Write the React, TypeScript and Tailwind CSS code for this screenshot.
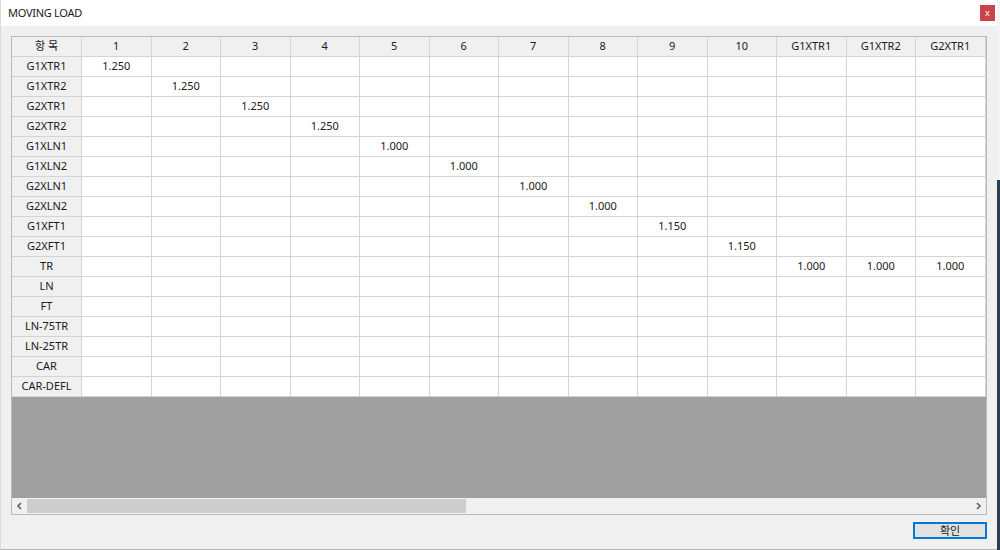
import React from "react";

const columns = ["1", "2", "3", "4", "5", "6", "7", "8", "9", "10", "G1XTR1", "G1XTR2", "G2XTR1"];

type Row = { name: string; values: Record<number, string> };

const rows: Row[] = [
  { name: "G1XTR1", values: { 0: "1.250" } },
  { name: "G1XTR2", values: { 1: "1.250" } },
  { name: "G2XTR1", values: { 2: "1.250" } },
  { name: "G2XTR2", values: { 3: "1.250" } },
  { name: "G1XLN1", values: { 4: "1.000" } },
  { name: "G1XLN2", values: { 5: "1.000" } },
  { name: "G2XLN1", values: { 6: "1.000" } },
  { name: "G2XLN2", values: { 7: "1.000" } },
  { name: "G1XFT1", values: { 8: "1.150" } },
  { name: "G2XFT1", values: { 9: "1.150" } },
  { name: "TR", values: { 10: "1.000", 11: "1.000", 12: "1.000" } },
  { name: "LN", values: {} },
  { name: "FT", values: {} },
  { name: "LN-75TR", values: {} },
  { name: "LN-25TR", values: {} },
  { name: "CAR", values: {} },
  { name: "CAR-DEFL", values: {} },
];

const font = "font-['Noto_Sans','Noto_Sans_CJK_KR',sans-serif]";

const MovingLoadDialog = () => {
  return (
    <div className={`flex w-[1000px] h-[550px] bg-white text-[#1a1a1a] ${font}`}>
      <div className="flex flex-col w-[997px] h-full bg-[#f0f0f0] border-l border-[#dcdcdc] border-b border-b-[#b4b4b4]">
        {/* title bar */}
        <div className="flex items-center justify-between h-[26px] bg-white pl-[7px] pr-[2px] shrink-0">
          <span className="text-[11px] tracking-tight">MOVING LOAD</span>
          <button className="flex items-center justify-center w-[15px] h-[16px] bg-[#c9434a] text-white text-[9px] leading-none mb-[1px]">
            x
          </button>
        </div>

        {/* grid */}
        <div className="ml-[10px] mt-[10px] w-[976px] h-[479px] flex flex-col border border-[#b9b9b9] bg-[#a0a0a0] overflow-hidden shrink-0">
          <div className="grid grid-cols-[69px_repeat(13,68.5px)] gap-px bg-[#d4d4d4] border-b border-[#d4d4d4] w-[990px] text-[11px]">
            <div className="h-[19px] flex items-center justify-center bg-[#f0f0f0]">항 목</div>
            {columns.map((c) => (
              <div key={c} className="h-[19px] flex items-center justify-center bg-[#f0f0f0]">
                {c}
              </div>
            ))}
            {rows.map((row) => (
              <React.Fragment key={row.name}>
                <div className="h-[19px] flex items-center justify-center bg-[#f0f0f0]">{row.name}</div>
                {columns.map((c, i) => (
                  <div key={c} className="h-[19px] flex items-center justify-center bg-white">
                    {row.values[i] ?? ""}
                  </div>
                ))}
              </React.Fragment>
            ))}
          </div>
          <div className="flex-1" />
          {/* horizontal scrollbar */}
          <div className="flex items-center h-[16px] bg-[#f0f0f0] shrink-0">
            <div className="w-[15px] h-full flex items-center justify-center">
              <svg width="7" height="8" viewBox="0 0 7 8">
                <path d="M5 1 L2 4 L5 7" fill="none" stroke="#606060" strokeWidth="1.6" />
              </svg>
            </div>
            <div className="w-[439px] h-[14px] bg-[#cdcdcd]" />
            <div className="flex-1" />
            <div className="w-[15px] h-full flex items-center justify-center">
              <svg width="7" height="8" viewBox="0 0 7 8">
                <path d="M2 1 L5 4 L2 7" fill="none" stroke="#606060" strokeWidth="1.6" />
              </svg>
            </div>
          </div>
        </div>

        {/* footer */}
        <div className="flex justify-end pr-[10px] mt-[7px]">
          <button className="w-[74px] h-[17px] border-2 border-[#0078d7] bg-[#e1e1e1] text-[11px] leading-none flex items-center justify-center">
            확인
          </button>
        </div>
      </div>
      <div className="flex flex-col w-[3px] h-full">
        <div className="h-[180px] bg-[#f4f4f4]" />
        <div className="flex-1 bg-[#2c3e50]" />
      </div>
    </div>
  );
};

export default MovingLoadDialog;
